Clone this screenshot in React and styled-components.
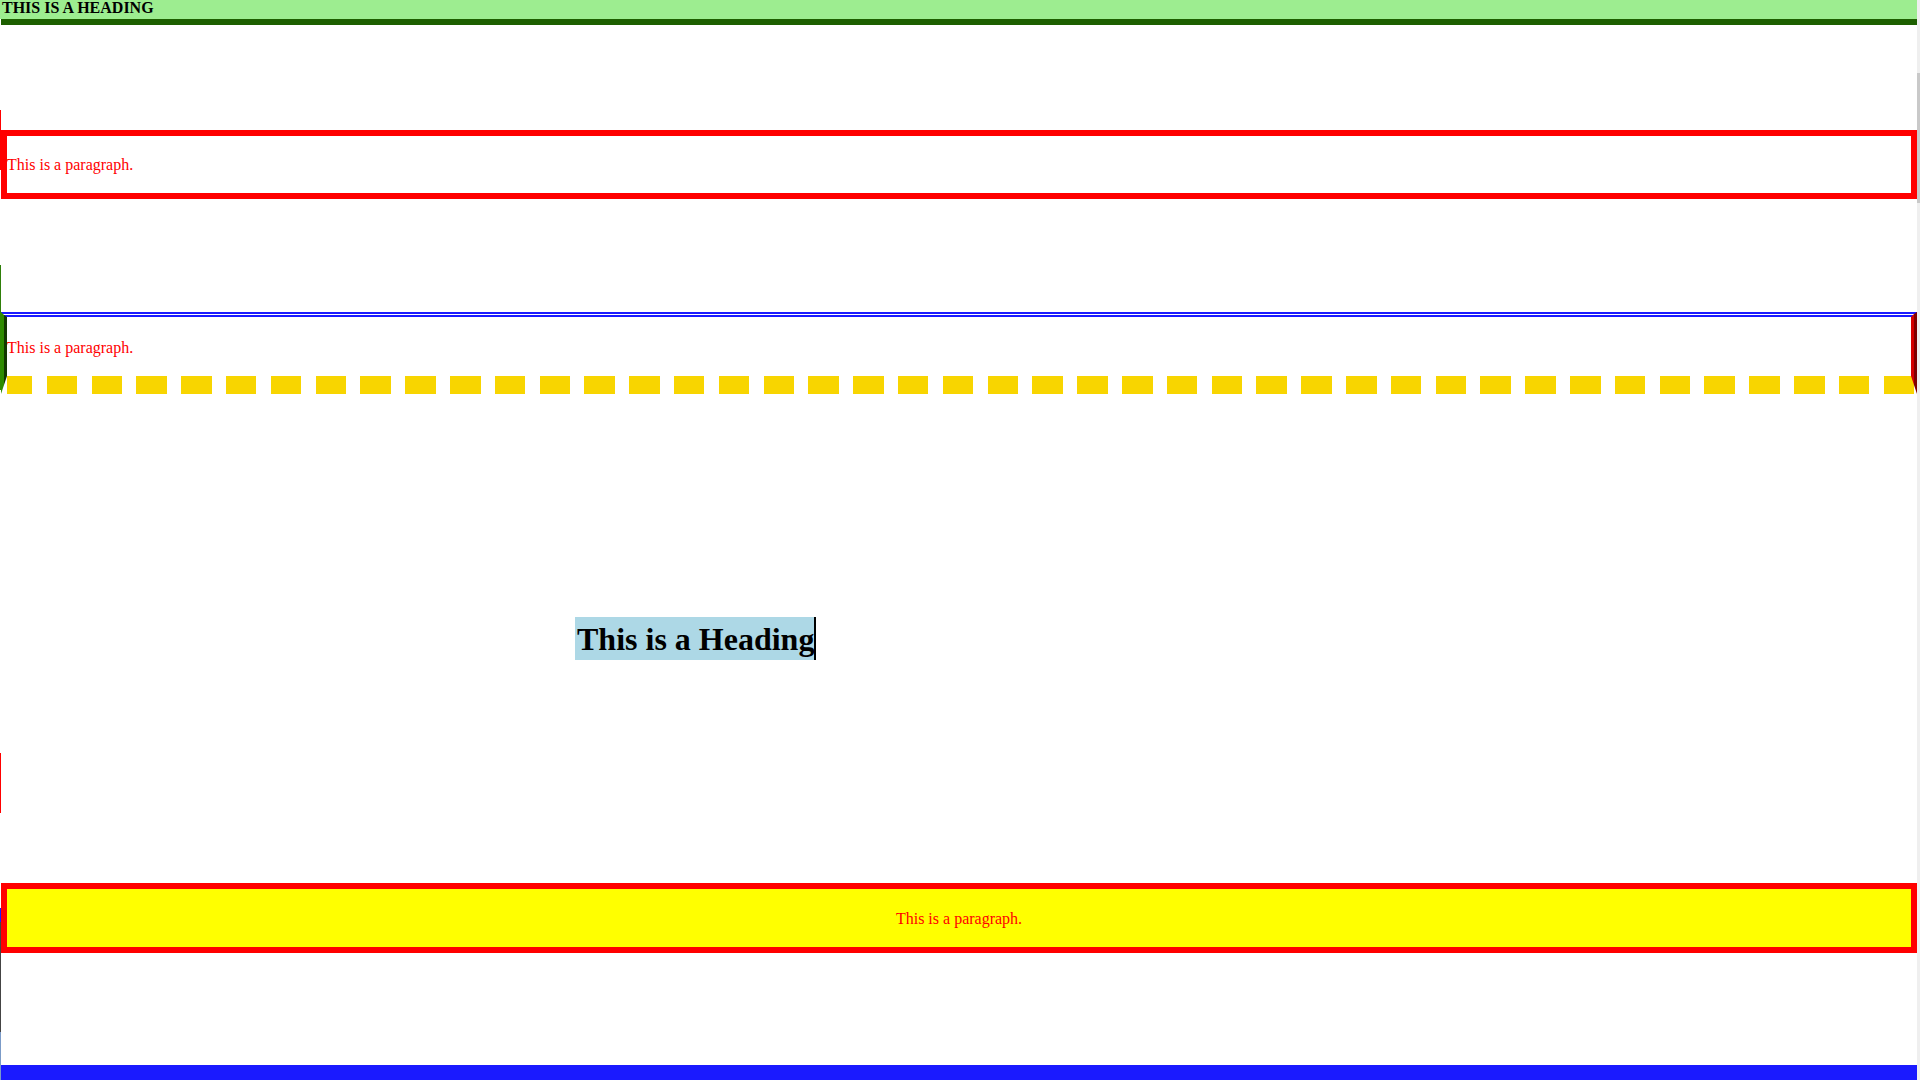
import React from "react";
import styled, { createGlobalStyle } from "styled-components";

const GlobalStyle = createGlobalStyle`
   html, body {
      margin: 0;
      padding: 0;
      background: #ffffff;
   }
   body {
      font-family: "Liberation Serif", "Times New Roman", serif;
      font-size: 16px;
   }
`;

const railMarks = [
   { h: 19, c: "#9ded90" },
   { h: 91, c: "transparent" },
   { h: 60, c: "#ff0000" },
   { h: 95, c: "transparent" },
   { h: 47, c: "#2f7f0a" },
   { h: 78, c: "#2e8b00" },
   { h: 363, c: "transparent" },
   { h: 60, c: "#ff0000" },
   { h: 95, c: "transparent" },
   { h: 14, c: "#1a1aff" },
   { h: 110, c: "#444444" },
   { h: 48, c: "#7b9bc8" },
];

export default function App() {
   return (
      <>
         <GlobalStyle />
         <Page>
            <Rail>
               {railMarks.map((m, i) => (
                  <RailMark key={i} $h={m.h} $c={m.c} />
               ))}
            </Rail>
            <Main>
               <TopHeading>This is a heading</TopHeading>
               <BoxedText>This is a paragraph.</BoxedText>
               <MixedBorderText>This is a paragraph.</MixedBorderText>
               <HeadingRow>
                  <BlueHeading>This is a Heading</BlueHeading>
               </HeadingRow>
               <YellowText>This is a paragraph.</YellowText>
               <BottomBar />
            </Main>
            <ScrollTrack>
               <ScrollThumb />
            </ScrollTrack>
         </Page>
      </>
   );
}

const Page = styled.div`
   display: flex;
   width: 1920px;
   height: 1080px;
   overflow: hidden;
   background: #ffffff;
`;

const Rail = styled.div`
   display: flex;
   flex-direction: column;
   width: 1px;
   flex-shrink: 0;
`;

const RailMark = styled.div`
   height: ${(p) => p.$h}px;
   background: ${(p) => p.$c};
   flex-shrink: 0;
`;

const Main = styled.div`
   flex: 1;
   display: flex;
   flex-direction: column;
   min-width: 0;
`;

const TopHeading = styled.h1`
   margin: 0;
   height: 19px;
   padding-left: 1px;
   background: #9ded90;
   border-bottom: 6px solid #1d5f00;
   font-size: 16px;
   font-weight: 700;
   line-height: 16px;
   text-transform: uppercase;
   color: #000000;
`;

const BoxedText = styled.p`
   margin: 105px 0 0;
   padding: 20px 0 19px;
   border: 6px solid #ff0000;
   line-height: 18px;
   color: #ff0000;
`;

/* dashed bottom edge drawn as a gradient so the dash rhythm matches */
const MixedBorderText = styled.p`
   margin: 113px 0 0;
   padding: 22px 0 19px;
   border-top: 5px double #1a1aff;
   border-left: 6px ridge #2e8b00;
   border-right: 6px ridge #d40000;
   border-bottom: 18px solid transparent;
   background-image: repeating-linear-gradient(
      to right,
      #f8d500 0 30.5px,
      transparent 30.5px 44.8px
   );
   background-origin: border-box;
   background-clip: border-box;
   background-size: 100% 18px;
   background-position: 1px bottom;
   background-repeat: no-repeat;
   line-height: 18px;
   color: #ff0000;
`;

const HeadingRow = styled.div`
   margin-top: 223px;
   padding-left: 574px;
   display: flex;
`;

const BlueHeading = styled.h1`
   margin: 0;
   padding-left: 2px;
   height: 43px;
   background: #add8e6;
   border-right: 2px solid #000000;
   font-size: 32px;
   font-weight: 700;
   line-height: 45px;
   color: #000000;
   white-space: nowrap;
   overflow: hidden;
`;

const YellowText = styled.p`
   margin: 223px 0 0;
   padding: 21px 0 19px;
   border: 6px solid #ff0000;
   background: #ffff00;
   line-height: 18px;
   text-align: center;
   color: #ff0000;
`;

const BottomBar = styled.div`
   margin-top: 112px;
   height: 15px;
   background: #1a1aff;
`;

const ScrollTrack = styled.div`
   width: 3px;
   flex-shrink: 0;
   background: #efefef;
   display: flex;
   flex-direction: column;
`;

const ScrollThumb = styled.div`
   margin-top: 73px;
   height: 130px;
   background: #c9c9c9;
`;
